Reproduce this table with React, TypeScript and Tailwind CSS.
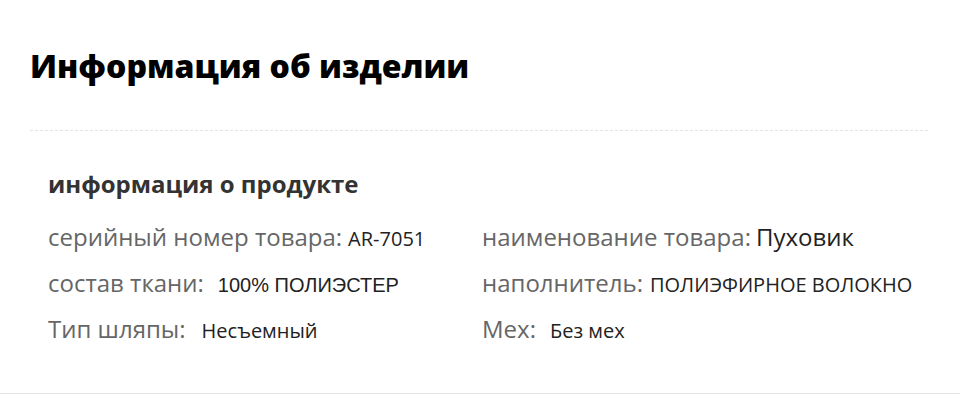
const rows = [
  [
    { label: 'серийный номер товара:', value: 'AR-7051', valueClass: 'ml-[6px] text-[20px] font-["Open_Sans"]' },
    { label: 'наименование товара:', value: 'Пуховик', valueClass: 'ml-[5px] text-[24px] font-["Open_Sans"] text-[#222]' },
  ],
  [
    { label: 'состав ткани:', value: '100% ПОЛИЭСТЕР', valueClass: 'ml-[14px] text-[20px] font-["Liberation_Sans"]' },
    { label: 'наполнитель:', value: 'ПОЛИЭФИРНОЕ ВОЛОКНО', valueClass: 'ml-[7px] text-[20px] font-["Open_Sans"]' },
  ],
  [
    { label: 'Тип шляпы:', value: 'Несъемный', valueClass: 'ml-[16px] text-[20px] font-["Open_Sans"]' },
    { label: 'Мех:', value: 'Без мех', valueClass: 'ml-[14px] text-[20px] font-["Open_Sans"]' },
  ],
];

export default function App() {
  return (
    <div className="w-[960px] h-[415px] bg-white font-['Open_Sans',sans-serif] overflow-hidden">
      <div className="pl-[30px] pr-[32px] pt-[40px]">
        <h1 className="text-[32px] font-extrabold leading-[52px] text-black">Информация об изделии</h1>
        <div className="mt-[38px] border-t border-dashed border-[#e3e3e3]" />
      </div>
      <div className="pl-[48px] pt-[38px] pb-[41px] border-b border-[#e4e4e4]">
        <h2 className="text-[24px] font-bold leading-[30px] text-[#333]">информация о продукте</h2>
        <div className="mt-[15px] flex flex-col">
          {rows.map((row, i) => (
            <div key={i} className="flex h-[46px] items-center">
              {row.map((cell, j) => (
                <div key={j} className={`flex items-baseline ${j === 0 ? 'w-[434px]' : ''}`}>
                  <span className="text-[24px] text-[#666]">{cell.label}</span>
                  <span className={`text-[#222] ${cell.valueClass}`}>{cell.value}</span>
                </div>
              ))}
            </div>
          ))}
        </div>
      </div>
    </div>
  );
}
